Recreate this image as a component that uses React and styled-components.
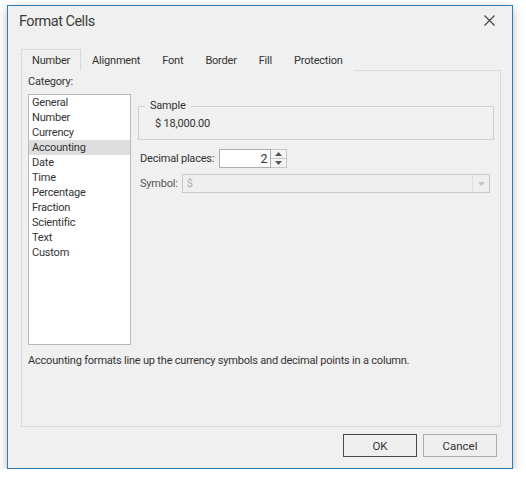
import React, { useState } from "react";
import styled, { createGlobalStyle } from "styled-components";

const categories = [
  "General",
  "Number",
  "Currency",
  "Accounting",
  "Date",
  "Time",
  "Percentage",
  "Fraction",
  "Scientific",
  "Text",
  "Custom",
];

const tabs = ["Number", "Alignment", "Font", "Border", "Fill", "Protection"];

const GlobalStyle = createGlobalStyle`
  body {
    margin: 0;
    background: #ffffff;
    font-family: "Segoe UI", Roboto, "Open Sans", sans-serif;
    font-size: 11px;
    letter-spacing: -0.2px;
    color: #333333;
  }
`;

function FormatCells() {
  const [activeTab, setActiveTab] = useState("Number");
  const [category, setCategory] = useState("Accounting");
  const [decimals, setDecimals] = useState(2);

  return (
    <Page>
      <Window>
        <TitleBar>
          <Title>Format Cells</Title>
          <CloseButton aria-label="Close">
            <svg width="11" height="11" viewBox="0 0 11 11">
              <path d="M0.5 0.5 L10.5 10.5 M10.5 0.5 L0.5 10.5" stroke="#444" strokeWidth="1.1" />
            </svg>
          </CloseButton>
        </TitleBar>

        <Body>
          <TabStrip>
            {tabs.map((t) => (
              <Tab key={t} $active={t === activeTab} onClick={() => setActiveTab(t)}>
                {t}
              </Tab>
            ))}
          </TabStrip>

          <TabPanel>
            <Label>Category:</Label>
            <PanelRow>
              <ListBox>
                {categories.map((c) => (
                  <ListItem key={c} $selected={c === category} onClick={() => setCategory(c)}>
                    {c}
                  </ListItem>
                ))}
              </ListBox>

              <Options>
                <GroupBox>
                  <GroupLegend>Sample</GroupLegend>
                  <SampleValue>$ 18,000.00</SampleValue>
                </GroupBox>

                <FieldRow>
                  <FieldLabel>Decimal places:</FieldLabel>
                  <SpinEdit>
                    <SpinValue>{decimals}</SpinValue>
                    <SpinButtons>
                      <SpinButton onClick={() => setDecimals((d) => Math.min(30, d + 1))}>
                        <svg width="7" height="4" viewBox="0 0 7 4">
                          <path d="M0 4 L3.5 0 L7 4 Z" fill="#555" />
                        </svg>
                      </SpinButton>
                      <SpinButton onClick={() => setDecimals((d) => Math.max(0, d - 1))}>
                        <svg width="7" height="4" viewBox="0 0 7 4">
                          <path d="M0 0 L3.5 4 L7 0 Z" fill="#555" />
                        </svg>
                      </SpinButton>
                    </SpinButtons>
                  </SpinEdit>
                </FieldRow>

                <FieldRow>
                  <FieldLabel $disabled>Symbol:</FieldLabel>
                  <ComboBox>
                    <ComboValue>$</ComboValue>
                    <ComboArrow>
                      <svg width="7" height="4" viewBox="0 0 7 4">
                        <path d="M0 0 L3.5 4 L7 0 Z" fill="#c4c4c4" />
                      </svg>
                    </ComboArrow>
                  </ComboBox>
                </FieldRow>
              </Options>
            </PanelRow>
            <Description>
              Accounting formats line up the currency symbols and decimal points in a column.
            </Description>
          </TabPanel>

          <ButtonRow>
            <DialogButton $default>OK</DialogButton>
            <DialogButton>Cancel</DialogButton>
          </ButtonRow>
        </Body>
      </Window>
    </Page>
  );
}

const Page = styled.div`
  padding: 5px 0 0 7px;
`;

const Window = styled.div`
  width: 506px;
  height: 464px;
  box-sizing: border-box;
  background: #f0f0f0;
  border: 1px solid #2f7fb6;
  box-shadow: 0 3px 9px rgba(0, 0, 0, 0.28);
  display: flex;
  flex-direction: column;
`;

const TitleBar = styled.div`
  height: 31px;
  display: flex;
  align-items: center;
  justify-content: space-between;
  padding: 0 17px 0 11px;
`;

const Title = styled.span`
  font-size: 14.5px;
  letter-spacing: -0.5px;
  color: #3c3c3c;
`;

const CloseButton = styled.span`
  display: flex;
  align-items: center;
  margin-top: -2px;
`;

const Body = styled.div`
  flex: 1;
  display: flex;
  flex-direction: column;
  padding: 12px 11px 11px 13px;
`;

const TabStrip = styled.div`
  display: flex;
  height: 21px;
  position: relative;
  z-index: 1;
`;

const Tab = styled.div`
  box-sizing: border-box;
  height: 22px;
  padding: 0 10px;
  display: flex;
  align-items: center;
  color: #333;
  cursor: default;
  border: 1px solid ${(p) => (p.$active ? "#d9d9d9" : "transparent")};
  border-bottom: 1px solid ${(p) => (p.$active ? "#f0f0f0" : "transparent")};
  background: #f0f0f0;
`;

const TabPanel = styled.div`
  width: 480px;
  height: 357px;
  box-sizing: border-box;
  border: 1px solid #d9d9d9;
  padding: 2px 6px 0 6px;
  display: flex;
  flex-direction: column;
`;

const Label = styled.div`
  height: 21px;
  line-height: 17px;
`;

const PanelRow = styled.div`
  display: flex;
  gap: 7px;
`;

const ListBox = styled.div`
  width: 103px;
  height: 251px;
  box-sizing: border-box;
  background: #ffffff;
  border: 1px solid #b9b9b9;
`;

const ListItem = styled.div`
  height: 15px;
  line-height: 15px;
  padding: 0 3px;
  background: ${(p) => (p.$selected ? "#dedede" : "transparent")};
  cursor: default;
`;

const Options = styled.div`
  flex: 1;
  display: flex;
  flex-direction: column;
  padding-top: 12px;
`;

const GroupBox = styled.div`
  position: relative;
  height: 34px;
  box-sizing: border-box;
  border: 1px solid #d0d0d0;
`;

const GroupLegend = styled.span`
  position: absolute;
  top: -9px;
  left: 6px;
  padding: 0 5px;
  background: #f0f0f0;
  line-height: 16px;
`;

const SampleValue = styled.div`
  padding: 9px 0 0 16px;
  line-height: 16px;
`;

const FieldRow = styled.div`
  display: flex;
  align-items: center;
  margin-top: 9px;
  padding-left: 2px;
  &:last-child {
    margin-top: 6px;
  }
`;

const FieldLabel = styled.span`
  color: ${(p) => (p.$disabled ? "#555" : "#333")};
  margin-right: 5px;
`;

const SpinEdit = styled.div`
  display: flex;
  height: 19px;
`;

const SpinValue = styled.div`
  width: 52px;
  box-sizing: border-box;
  background: #fff;
  border: 1px solid #adadad;
  text-align: right;
  padding-right: 3px;
  line-height: 17px;
  font-size: 12.5px;
`;

const SpinButtons = styled.div`
  width: 16px;
  display: flex;
  flex-direction: column;
  box-sizing: border-box;
  border: 1px solid #c8c8c8;
  border-left: none;
`;

const SpinButton = styled.div`
  flex: 1;
  display: flex;
  align-items: center;
  justify-content: center;
  background: #f4f4f4;
  & + & {
    border-top: 1px solid #c8c8c8;
  }
`;

const ComboBox = styled.div`
  flex: 1;
  height: 19px;
  display: flex;
  box-sizing: border-box;
  border: 1px solid #c9c9c9;
  background: #efefef;
  margin: 0 4px 0 -1px;
`;

const ComboValue = styled.div`
  flex: 1;
  color: #b0b0b0;
  line-height: 17px;
  padding-left: 4px;
`;

const ComboArrow = styled.div`
  width: 16px;
  display: flex;
  align-items: center;
  justify-content: center;
  border-left: 1px solid #dedede;
`;

const Description = styled.div`
  margin-top: 8px;
  line-height: 16px;
`;

const ButtonRow = styled.div`
  display: flex;
  justify-content: flex-end;
  gap: 6px;
  padding-top: 7px;
  padding-right: 4px;
`;

const DialogButton = styled.button`
  width: 74px;
  height: 23px;
  box-sizing: border-box;
  font: inherit;
  font-size: 11.5px;
  color: #333;
  background: #efefef;
  border: 1px solid ${(p) => (p.$default ? "#4a4a4a" : "#acacac")};
  border-radius: 0;
  padding: 0;
`;

export default function App() {
  return (
    <>
      <GlobalStyle />
      <FormatCells />
    </>
  );
}
